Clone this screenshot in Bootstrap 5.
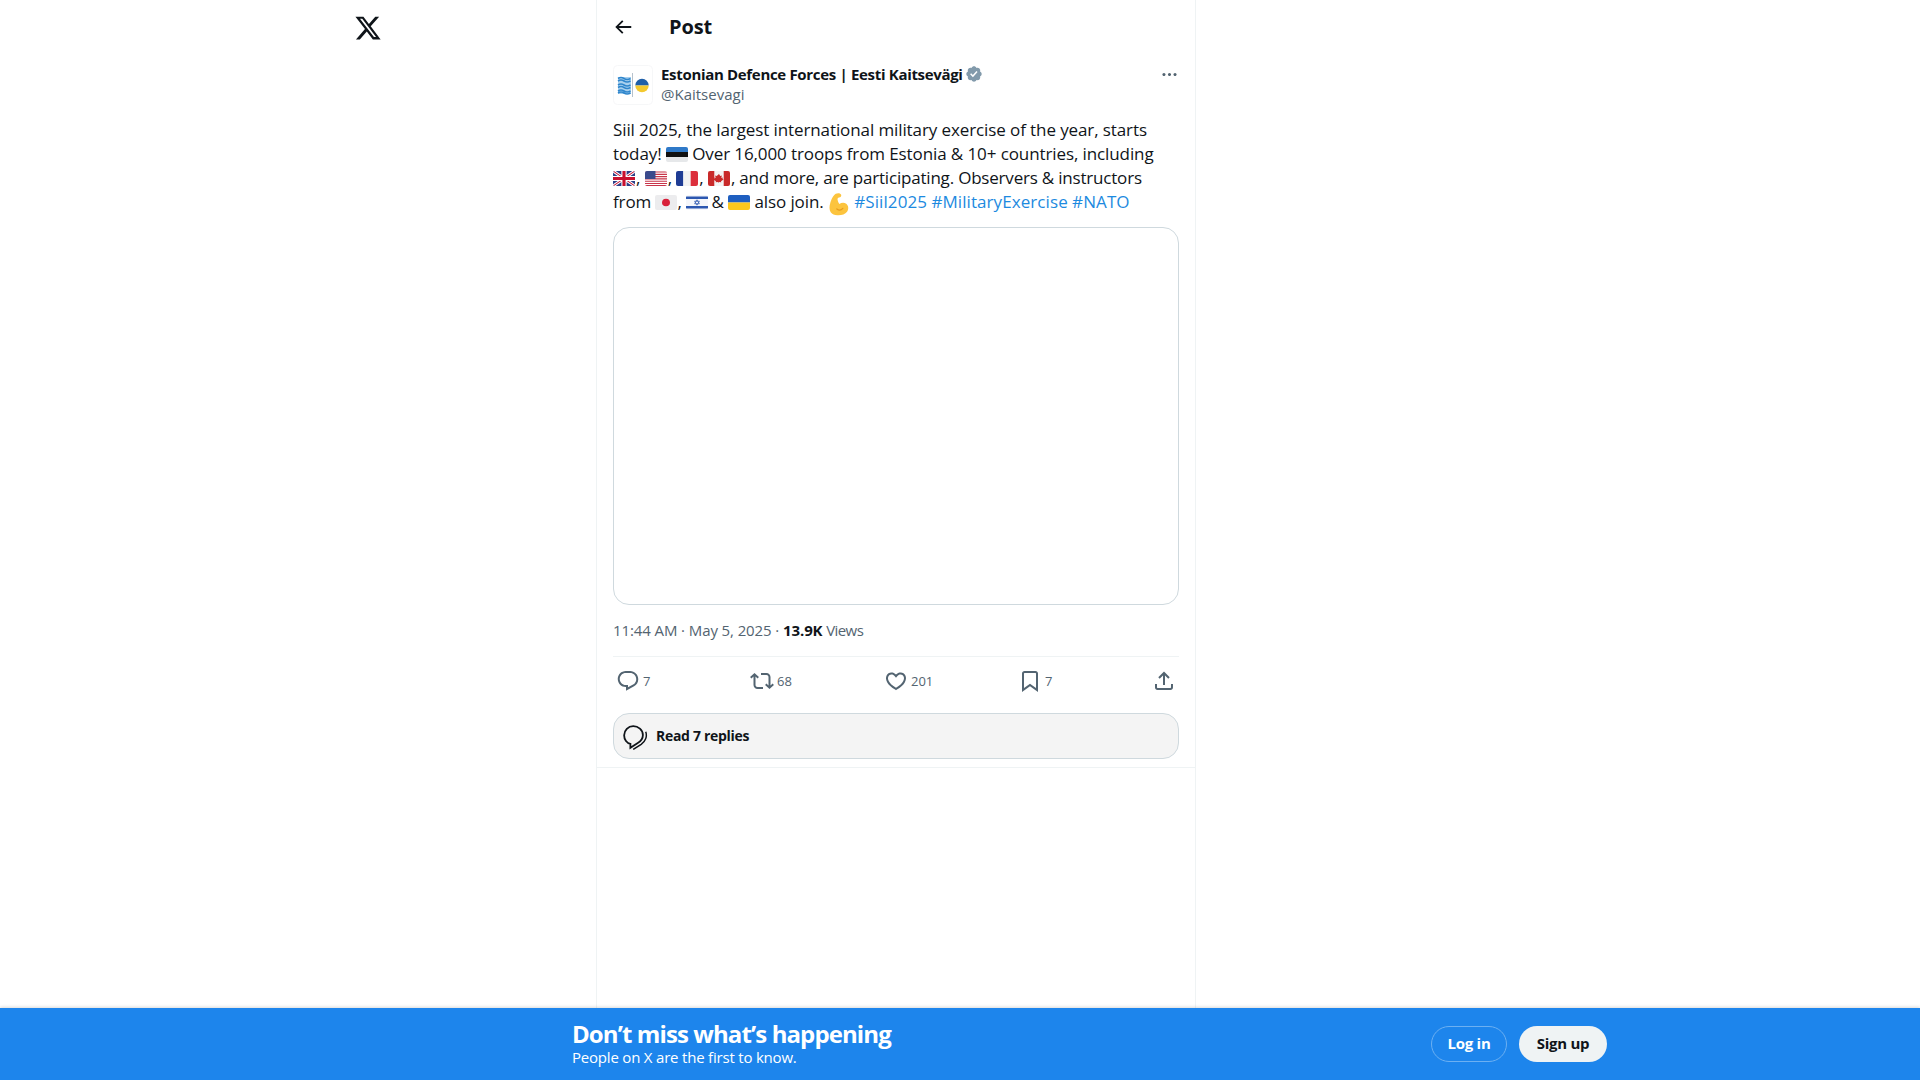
<!DOCTYPE html>
<html lang="en">
<head>
<meta charset="utf-8">
<title>Post</title>
<link href="https://cdn.jsdelivr.net/npm/bootstrap@5.3.0/dist/css/bootstrap.min.css" rel="stylesheet">
<style>
html,body{height:100%;}
body{font-family:"Open Sans","Noto Sans","Liberation Sans",sans-serif;color:#0f1419;background:#fff;overflow:hidden;}
.shell{height:100vh;}
.stage{flex:1 1 auto;min-height:0;}
.side{width:596px;padding:14px 0 0 354px;flex:none;}
.logo{width:28px;height:28px;display:block;fill:#0f1419;}
.mid{width:600px;flex:none;border-left:1px solid #eff3f4;border-right:1px solid #eff3f4;}
.top-row{height:53px;padding-left:15px;}
.top-row svg{width:22px;height:22px;fill:#0f1419;}
.top-row h1{font-size:20px;font-weight:700;margin:0 0 0 35px;line-height:24px;letter-spacing:-.15px;}
.post{padding:0 16px;border-bottom:1px solid #eff3f4;height:715px;}
.author{height:65px;padding-top:11px;}
.avatar{width:40px;height:40px;margin:1px 8px 0 0;flex:none;}
.name{font-size:15px;font-weight:700;line-height:20px;letter-spacing:-.32px;}
.badge-v{width:18px;height:18px;fill:#829aab;margin-left:2px;}
.handle{font-size:15px;line-height:21px;color:#536471;letter-spacing:0;}
.more{width:19px;height:19px;fill:#536471;margin:1px 0 0 auto;}
.body-text{font-size:17px;line-height:24px;height:96px;margin:0;letter-spacing:-.1px;white-space:nowrap;}
.body-text a{color:#1d8ae0;text-decoration:none;letter-spacing:.08px;}
.squeeze{letter-spacing:-.2px;}
.fl{display:inline-block;vertical-align:-2px;width:22px;height:15px;border-radius:2px;}
.fl-gap{margin-right:1px;}
.fl-jp{margin:0 1px 0 -1px;}
.fl-il{margin-right:-1px;}
.mus{display:inline-block;vertical-align:-5px;width:22px;height:24px;margin:-3px 0;}
.media-box{height:378px;border:1px solid #cfd9de;border-radius:16px;margin-top:13px;}
.stamp{font-size:15px;line-height:20px;color:#536471;padding-top:15px;height:51px;letter-spacing:-.1px;}
.stamp b{color:#0f1419;font-weight:700;}
.views{letter-spacing:-.6px;}
.acts{border-top:1px solid #eff3f4;height:57px;padding:0 4px 9px 3px;}
.act{flex:0 0 134px;color:#536471;font-size:13px;}
.act:last-child{flex:none;}
.act span{margin-top:3px;}
.act svg{width:24px;height:24px;fill:#536471;margin-right:3px;}
.act:last-child svg{margin-right:0;}
.read{height:46px;border:1px solid #cfd9de;border-radius:16px;background:#f4f4f4;padding:0 8px 2px 9px;font-size:14px;font-weight:700;letter-spacing:-.3px;}
.read svg{width:25px;height:25px;fill:none;stroke:#0f1419;stroke-width:1.6;margin:4px 8px 0 0;}
.promo{height:72px;flex:none;background:#1d85ec;color:#fff;box-shadow:0 -1px 3px rgba(0,0,0,.15);}
.promo-in{padding:0 313px 0 572px;}
.promo h2{font-size:24px;font-weight:700;line-height:28px;margin:-2px 0 0;letter-spacing:-.9px;}
.promo p{font-size:15px;line-height:18px;margin:0;letter-spacing:-.2px;}
.pill{height:36px;border-radius:18px;font-size:15px;font-weight:700;display:flex;align-items:center;justify-content:center;padding:0 0 1px;letter-spacing:-.25px;}
.pill-a{width:76px;color:#fff;border:1px solid #6cb0f2;margin-right:12px;}
.pill-b{width:88px;background:#eff3f4;color:#0f1419;border:0;}
</style>
</head>
<body>
<div class="shell d-flex flex-column">
  <div class="stage d-flex">
    <div class="side">
      <svg class="logo" viewBox="0 0 24 24"><path d="M18.244 2.25h3.308l-7.227 8.26 8.502 11.24H16.17l-5.214-6.817L4.99 21.75H1.68l7.73-8.835L1.254 2.25H8.08l4.713 6.231zm-1.161 17.52h1.833L7.084 4.126H5.117z"/></svg>
    </div>
    <div class="mid">
      <div class="top-row d-flex align-items-center">
        <svg viewBox="0 0 24 24"><path d="M7.414 13l5.043 5.04-1.414 1.42L3.586 12l7.457-7.46 1.414 1.42L7.414 11H21v2H7.414z"/></svg>
        <h1>Post</h1>
      </div>
      <div class="post">
        <div class="author d-flex">
          <svg class="avatar" viewBox="0 0 40 40">
            <rect x=".5" y=".5" width="39" height="39" rx="4" fill="#fff" stroke="#f6f7f8"/>
            <rect x="5" y="12" width="13" height="17" fill="#a9d0ee"/>
            <path d="M5 13.500q3-2 6 0t6.500 0M5 16q3-2 6 0t6.500 0M5 20q3-2 6 0t6.500 0M5 22.500q3-2 6 0t6.500 0M5 26q3-2 6 0t6.500 0M5 28q3-2 6 0t6.500 0" fill="none" stroke="#2f86cc" stroke-width="1.600"/>
            <rect x="19" y="8" width="1" height="24" fill="#b6c2cc"/>
            <path d="M22.300 20.500a6.700 6.700 0 0 1 13.400 0z" fill="#1f5fa8"/>
            <path d="M22.300 20.500a6.700 6.700 0 0 0 13.400 0z" fill="#f4c92e"/>
          </svg>
          <div>
            <div class="name d-flex align-items-center">Estonian Defence Forces | Eesti Kaitsevägi<svg class="badge-v" viewBox="0 0 24 24"><path d="M22.25 12c0-1.43-.88-2.67-2.19-3.34.46-1.39.2-2.9-.81-3.91s-2.52-1.27-3.91-.81c-.66-1.31-1.91-2.19-3.34-2.19s-2.67.88-3.33 2.19c-1.4-.46-2.91-.2-3.92.81s-1.26 2.52-.8 3.91c-1.31.67-2.2 1.91-2.2 3.34s.89 2.67 2.2 3.34c-.46 1.39-.21 2.9.8 3.91s2.52 1.26 3.91.81c.67 1.31 1.91 2.19 3.34 2.19s2.68-.88 3.34-2.19c1.39.45 2.9.2 3.91-.81s1.27-2.52.81-3.91c1.31-.67 2.19-1.91 2.19-3.34zm-11.71 4.2L6.8 12.46l1.41-1.42 2.26 2.26 4.8-5.23 1.47 1.36-6.2 6.77z"/></svg></div>
            <div class="handle">@Kaitsevagi</div>
          </div>
          <svg class="more" viewBox="0 0 24 24"><path d="M3 12c0-1.1.9-2 2-2s2 .9 2 2-.9 2-2 2-2-.9-2-2zm9 2c1.1 0 2-.9 2-2s-.9-2-2-2-2 .9-2 2 .9 2 2 2zm7 0c1.1 0 2-.9 2-2s-.9-2-2-2-2 .9-2 2 .9 2 2 2z"/></svg>
        </div>
        <p class="body-text">Siil 2025, the largest international military exercise of the year, starts<br>today! <svg class="fl" viewBox="0 0 21 15" preserveAspectRatio="none"><rect width="21" height="5" fill="#2f79c8"/><rect y="5" width="21" height="5" fill="#111"/><rect y="10" width="21" height="5" fill="#e6e8ea"/></svg> Over 16,000 troops from Estonia &amp; 10+ countries, including<br><svg class="fl fl-gap" viewBox="0 0 21 15" preserveAspectRatio="none"><rect width="21" height="15" fill="#2b3f87"/><path d="M0 0l21 15M21 0L0 15" stroke="#fff" stroke-width="3"/><path d="M0 0l21 15M21 0L0 15" stroke="#c8102e" stroke-width="1"/><path d="M10.500 0v15M0 7.500h21" stroke="#fff" stroke-width="5"/><path d="M10.500 0v15M0 7.500h21" stroke="#c8102e" stroke-width="3"/></svg>, <svg class="fl fl-gap" viewBox="0 0 21 15" preserveAspectRatio="none"><rect width="21" height="15" fill="#fff"/><path d="M0 1h21M0 3.300h21M0 5.600h21M0 7.900h21M0 10.200h21M0 12.500h21M0 14.500h21" stroke="#c8344a" stroke-width="1.150"/><rect width="10" height="8" fill="#3a4a8c"/></svg>, <svg class="fl fl-gap" viewBox="0 0 21 15" preserveAspectRatio="none"><rect width="7" height="15" fill="#1f3c94"/><rect x="7" width="7" height="15" fill="#f2f2f2"/><rect x="14" width="7" height="15" fill="#dc2f3c"/></svg>, <svg class="fl fl-gap" viewBox="0 0 21 15" preserveAspectRatio="none"><rect width="21" height="15" fill="#f4f4f4"/><rect width="6" height="15" fill="#c92a2a"/><rect x="15" width="6" height="15" fill="#c92a2a"/><path d="M10.500 3l1.200 2 1.500-.6-.5 2.700 1.500-.5-.3 1.300 1 .6-2.500 1.800.3 1-2.500-.4V12h-.4v-1.100l-2.500.4.300-1-2.500-1.800 1-.6-.3-1.300 1.500.5-.5-2.700 1.500.6z" fill="#c92a2a"/></svg><span class="squeeze">, and more, are participating. Observers &amp; instructors</span><br>from <svg class="fl fl-jp" viewBox="0 0 21 15" preserveAspectRatio="none"><rect width="21" height="15" fill="#ececee"/><circle cx="10.500" cy="7.500" r="3.800" fill="#d8203a"/></svg>, <svg class="fl fl-il" viewBox="0 0 21 15" preserveAspectRatio="none"><rect width="21" height="15" fill="#f4f6fa"/><rect y="1.500" width="21" height="2.500" fill="#2c57b0"/><rect y="11" width="21" height="2.500" fill="#2c57b0"/><path d="M10.500 4.800l2.300 4H8.200zM10.500 10.200l-2.300-4h4.600z" fill="none" stroke="#2c57b0" stroke-width=".7"/></svg> &amp; <svg class="fl" viewBox="0 0 21 15" preserveAspectRatio="none"><rect width="21" height="7.500" fill="#1f5fc0"/><rect y="7.500" width="21" height="7.500" fill="#fbc81e"/></svg> also join. <svg class="mus" viewBox="2 0 20 22"><path d="M9 1.500c2-.8 4.500-.6 5 1 .4 1.500-.6 2.300-2 2.600-1 .3-1.500 1-1.300 2 .2 1.300.8 2.700 1.700 3.800 1.800-1.200 4.500-1.400 6.200-.1 2.200 1.600 2.500 5 .8 7.300-1.800 2.400-5.500 3.500-9 3.200-2.500-.2-4.700-1.100-6-2.800C3 16 3 13 4 10c.8-3 2.600-7 5-8.500z" fill="#fcc43e"/><path d="M10 15.500c1.800 1.400 4 1.300 5.500-.5" fill="none" stroke="#e89c1d" stroke-width="1.200" stroke-linecap="round"/></svg> <a href="#">#Siil2025</a> <a href="#">#MilitaryExercise</a> <a href="#">#NATO</a></p>
        <div class="media-box"></div>
        <div class="stamp">11:44 AM · May 5, 2025 · <b>13.9K</b> <span class="views">Views</span></div>
        <div class="acts d-flex align-items-center">
          <div class="act d-flex align-items-center"><svg viewBox="0 0 24 24"><path d="M1.751 10c0-4.420 3.584-8 8.005-8h4.366c4.490 0 8.129 3.640 8.129 8.130 0 2.960-1.607 5.680-4.196 7.110l-8.054 4.460v-3.690h-.067c-4.490.1-8.183-3.510-8.183-8.010zm8.005-6c-3.317 0-6.005 2.690-6.005 6 0 3.370 2.770 6.080 6.138 6.010l.351-.010h1.761v2.300l5.087-2.810c1.951-1.080 3.163-3.130 3.163-5.360 0-3.390-2.744-6.130-6.129-6.130H9.756z"/></svg><span>7</span></div>
          <div class="act d-flex align-items-center"><svg viewBox="0 0 24 24"><path d="M4.500 3.880l4.432 4.140-1.364 1.460L5.500 7.550V16c0 1.100.896 2 2 2H13v2H7.500c-2.209 0-4-1.790-4-4V7.550L1.432 9.480.068 8.020 4.500 3.880zM16.500 6H11V4h5.500c2.209 0 4 1.790 4 4v8.450l2.068-1.930 1.364 1.460-4.432 4.140-4.432-4.140 1.364-1.460 2.068 1.930V8c0-1.100-.896-2-2-2z"/></svg><span>68</span></div>
          <div class="act d-flex align-items-center"><svg viewBox="0 0 24 24"><path d="M16.697 5.500c-1.222-.060-2.679.510-3.890 2.160l-.805 1.090-.806-1.090C9.984 6.010 8.526 5.440 7.304 5.500c-1.243.070-2.349.780-2.910 1.910-.552 1.120-.633 2.780.479 4.820 1.074 1.970 3.257 4.270 7.129 6.610 3.870-2.340 6.052-4.640 7.126-6.610 1.111-2.040 1.030-3.700.477-4.820-.561-1.130-1.666-1.840-2.908-1.910zm4.187 7.690c-1.351 2.480-4.001 5.120-8.379 7.670l-.503.300-.504-.3c-4.379-2.550-7.029-5.190-8.382-7.670-1.360-2.500-1.410-4.860-.514-6.670.887-1.790 2.647-2.910 4.601-3.010 1.651-.090 3.368.560 4.798 2.010 1.429-1.450 3.146-2.100 4.796-2.010 1.954.100 3.714 1.220 4.601 3.010.896 1.810.846 4.170-.514 6.670z"/></svg><span>201</span></div>
          <div class="act d-flex align-items-center"><svg viewBox="0 0 24 24"><path d="M4 4.500C4 3.120 5.119 2 6.500 2h11C18.881 2 20 3.120 20 4.500v18.440l-8-5.710-8 5.710V4.500zM6.500 4c-.276 0-.5.220-.5.500v14.560l6-4.290 6 4.290V4.500c0-.280-.224-.5-.5-.5h-11z"/></svg><span>7</span></div>
          <div class="act d-flex align-items-center"><svg viewBox="0 0 24 24"><path d="M12 2.590l5.700 5.700-1.410 1.420L13 6.410V16h-2V6.410l-3.300 3.300-1.410-1.420L12 2.590zM21 15l-.020 3.510c0 1.380-1.120 2.490-2.500 2.490H5.500C4.110 21 3 19.880 3 18.500V15h2v3.500c0 .280.220.5.500.5h12.980c.280 0 .5-.220.5-.5L19 15h2z"/></svg></div>
        </div>
        <div class="read d-flex align-items-center"><svg viewBox="2 2 22 22"><path d="M3 11c0-4.400 3.600-8 8-8s8.500 3.200 8.500 7.800c0 3.200-1.800 5.500-4.500 7l-6.500 4.200v-3.400C5.500 18.200 3 15 3 11z"/><path d="M22 8c1.500 4-.3 8.500-4 11l-7 4.500" stroke-width="1.300"/></svg>Read 7 replies</div>
      </div>
    </div>
  </div>
  <div class="promo d-flex align-items-center">
    <div class="promo-in w-100 d-flex align-items-center justify-content-between">
      <div>
        <h2>Don’t miss what’s happening</h2>
        <p>People on X are the first to know.</p>
      </div>
      <div class="d-flex">
        <a class="pill pill-a text-decoration-none" href="#">Log in</a>
        <a class="pill pill-b text-decoration-none" href="#">Sign up</a>
      </div>
    </div>
  </div>
</div>
<script src="https://cdn.jsdelivr.net/npm/bootstrap@5.3.0/dist/js/bootstrap.bundle.min.js"></script>
</body>
</html>
